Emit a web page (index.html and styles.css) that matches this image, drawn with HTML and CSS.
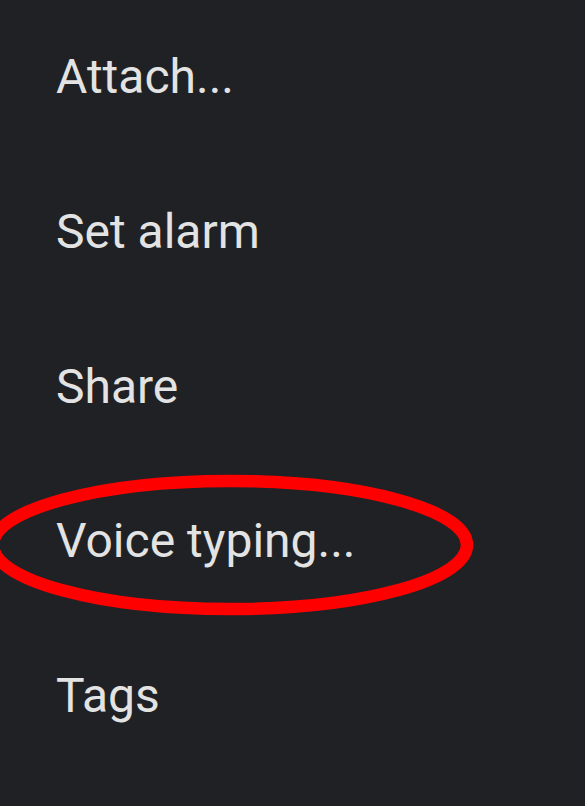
FILE: index.html
```html
<!DOCTYPE html>
<html>
<head>
<meta charset="utf-8">
<link rel="stylesheet" href="styles.css">
</head>
<body>
<div class="menu">
  <div class="item">Attach...</div>
  <div class="item">Set alarm</div>
  <div class="item">Share</div>
  <div class="item">Voice typing...</div>
  <div class="item">Tags</div>
  <svg class="mark" width="585" height="806" viewBox="0 0 585 806">
    <ellipse cx="230" cy="545" rx="237" ry="64" fill="none" stroke="#ff0000" stroke-width="12.5"/>
  </svg>
</div>
</body>
</html>
```
FILE: styles.css
```css
html, body {
  margin: 0;
  padding: 0;
  background: #1f2125;
  height: 100%;
  overflow: hidden;
}
.menu {
  position: relative;
  width: 585px;
  height: 806px;
  font-family: Roboto, "Noto Sans", sans-serif;
  font-size: 48px;
  color: #e3e3e3;
}
.item {
  height: 154.75px;
  line-height: 154.75px;
  padding-left: 56px;
  white-space: nowrap;
}
.mark {
  position: absolute;
  left: 0;
  top: 0;
  pointer-events: none;
}
```
